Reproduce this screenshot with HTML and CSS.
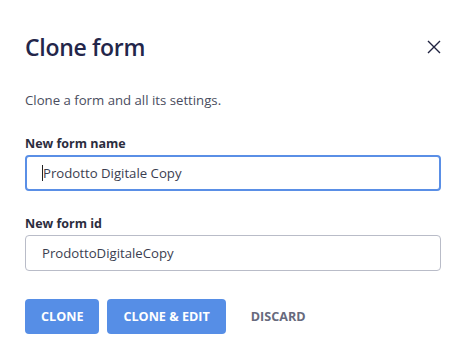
FILE: index.html
```html
<!DOCTYPE html>
<html>
<head>
<meta charset="utf-8">
<link rel="stylesheet" href="styles.css">
</head>
<body>
<div class="dialog">
  <div class="header">
    <h1 class="title">Clone form</h1>
    <button class="close" aria-label="Close">
      <svg width="14" height="14" viewBox="0 0 14 14"><path d="M1 1L13 13M13 1L1 13" stroke="#1f2340" stroke-width="1.4" fill="none"/></svg>
    </button>
  </div>
  <p class="desc">Clone a form and all its settings.</p>
  <div class="field">
    <label class="label">New form name</label>
    <div class="input focused"><span class="caret"></span>Prodotto Digitale Copy</div>
  </div>
  <div class="field">
    <label class="label">New form id</label>
    <div class="input">ProdottoDigitaleCopy</div>
  </div>
  <div class="actions">
    <button class="btn primary">CLONE</button>
    <button class="btn primary">CLONE &amp; EDIT</button>
    <button class="btn link">DISCARD</button>
  </div>
</div>
</body>
</html>
```
FILE: styles.css
```css
html, body { margin: 0; padding: 0; background: #fff; }
body { font-family: "Open Sans", "Noto Sans", sans-serif; }
.dialog { padding: 30px 26px 0 25px; width: 416px; }
.header { display: flex; justify-content: space-between; align-items: center; height: 34px; }
.title { margin: 0; font-size: 23px; font-weight: 600; color: #23264a; letter-spacing: -0.3px; }
.close { background: none; border: 0; padding: 0; width: 14px; height: 14px; display: flex; }
.desc { margin: 27px 0 0; font-size: 13.2px; color: #4a4d5e; line-height: 18px; }
.field { margin-top: 26px; }
.field + .field { margin-top: 24px; }
.label { display: block; font-size: 12.5px; font-weight: 700; color: #2b2d3e; line-height: 18px; margin-bottom: 2px; }
.input { box-sizing: border-box; height: 36px; border: 1px solid #b9bcc8; border-radius: 4px; padding: 0 16px; display: flex; align-items: center; font-size: 13.2px; color: #3b3e50; }
.input.focused { border: 2px solid #5a8fe6; padding: 0 15px; }
.caret { display: inline-block; width: 1px; height: 16px; background: #222; }
.actions { display: flex; gap: 8px; margin-top: 28px; align-items: center; }
.btn { font-family: inherit; font-size: 12.6px; font-weight: 700; height: 35px; border-radius: 4px; border: 0; padding: 0 16px; cursor: pointer; }
.btn.primary { background: #568ee6; color: #fff; }
.btn.link { background: none; color: #676a7d; margin-left: 1px; }
```
